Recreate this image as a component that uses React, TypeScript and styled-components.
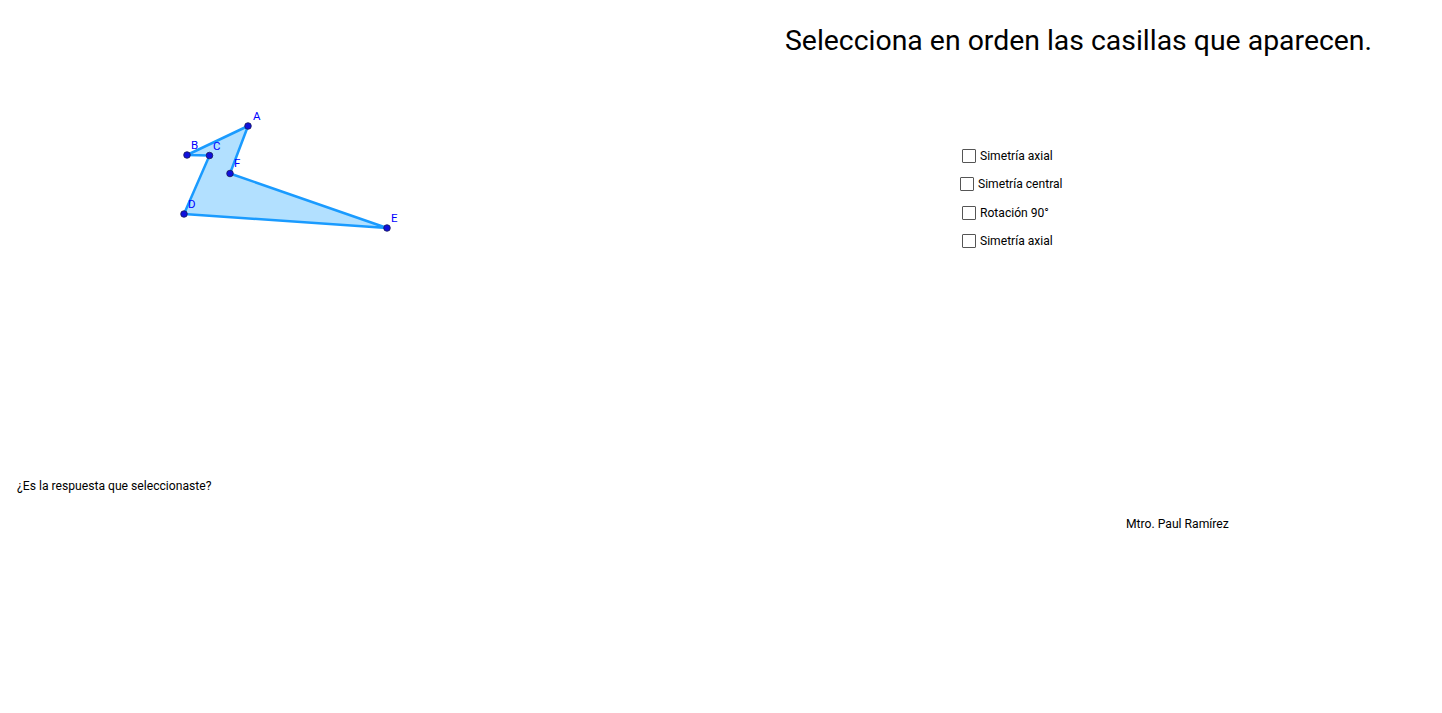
import React from "react";
import styled, { createGlobalStyle } from "styled-components";

const GlobalStyle = createGlobalStyle`
  html, body {
    margin: 0;
    padding: 0;
    background: #ffffff;
  }
  body {
    font-family: Roboto, "Liberation Sans", sans-serif;
    color: #000000;
  }
`;

const Canvas = styled.div`
  position: relative;
  width: 1442px;
  height: 713px;
  overflow: hidden;
  background: #ffffff;
`;

// items on the applet's free canvas
const Placed = styled.div<{ $x: number; $y: number }>`
  position: absolute;
  left: ${(p) => p.$x}px;
  top: ${(p) => p.$y}px;
  white-space: nowrap;
`;

const Title = styled(Placed)`
  font-size: 28.4px;
  line-height: 32px;
`;

const Caption = styled(Placed)`
  font-size: 12.15px;
  line-height: 14px;
`;

const CheckList = styled(Placed)`
  display: flex;
  flex-direction: column;
  gap: 14.33px;
`;

const CheckRow = styled.label<{ $shift?: number }>`
  display: flex;
  align-items: center;
  gap: 4px;
  height: 14px;
  margin-left: ${(p) => p.$shift ?? 0}px;
  font-size: 12.1px;
  line-height: 14px;
  cursor: pointer;
`;

const Box = styled.span`
  width: 12px;
  height: 12px;
  border: 1px solid #555555;
  border-radius: 1px;
  background: #ffffff;
  box-sizing: content-box;
`;

const Board = styled.svg`
  position: absolute;
  left: 0;
  top: 0;
`;

const points: Record<string, [number, number]> = {
  A: [248, 126],
  B: [187, 155],
  C: [209.5, 155.5],
  D: [184, 214],
  E: [387, 228],
  F: [230, 173.5],
};

const labels: Record<string, [number, number]> = {
  A: [253, 120],
  B: [191, 149],
  C: [213, 150],
  D: [188, 208],
  E: [391, 222],
  F: [234, 167],
};

const order = ["A", "B", "C", "D", "E", "F"];

const options = [
  { shift: 2, text: "Simetría axial" },
  { shift: 0, text: "Simetría central" },
  { shift: 2, text: "Rotación 90°" },
  { shift: 2, text: "Simetría axial" },
];

export default function App() {
  const poly = order.map((k) => points[k].join(",")).join(" ");
  return (
    <>
      <GlobalStyle />
      <Canvas>
        <Board width={1442} height={713}>
          <polygon
            points={poly}
            fill="rgba(0, 153, 255, 0.3)"
            stroke="#1a9bff"
            strokeWidth={2.5}
            strokeLinejoin="round"
          />
          {order.map((k) => (
            <circle
              key={k}
              cx={points[k][0]}
              cy={points[k][1]}
              r={3.3}
              fill="#1010dd"
              stroke="#1a1a55"
              strokeWidth={0.8}
            />
          ))}
          {order.map((k) => (
            <text
              key={"l" + k}
              x={labels[k][0]}
              y={labels[k][1]}
              fill="#0000ff"
              fontSize={11.5}
              fontFamily="Roboto, 'Liberation Sans', sans-serif"
            >
              {k}
            </text>
          ))}
        </Board>
        <Title $x={785} $y={25}>
          Selecciona en orden las casillas que aparecen.
        </Title>
        <CheckList $x={960} $y={149}>
          {options.map((o, i) => (
            <CheckRow key={i} $shift={o.shift}>
              <Box />
              <span>{o.text}</span>
            </CheckRow>
          ))}
        </CheckList>
        <Caption $x={17} $y={479}>
          ¿Es la respuesta que seleccionaste?
        </Caption>
        <Caption $x={1126} $y={517}>
          Mtro. Paul Ramírez
        </Caption>
      </Canvas>
    </>
  );
}
